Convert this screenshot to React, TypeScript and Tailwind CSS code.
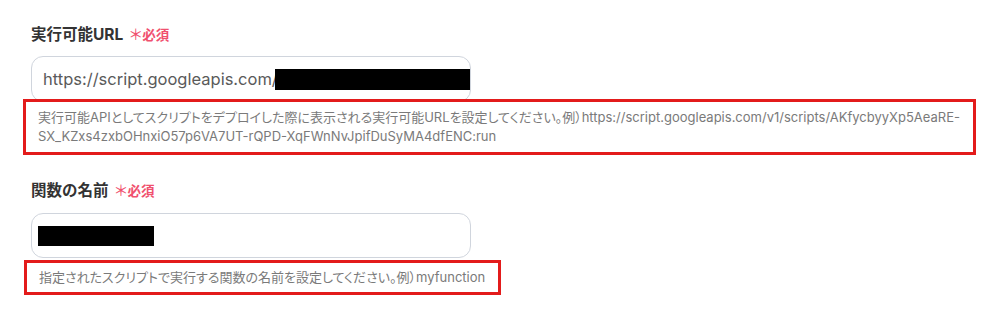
import React from "react";

const font = { fontFamily: "Inter, 'Noto Sans CJK JP', sans-serif" };
const help = { fontFeatureSettings: "'palt'" };

function Label({ text }: { text: string }) {
  return (
    <div className="ml-[8px] flex items-center h-[22px] gap-[5px]">
      <span className="text-[15.5px] font-bold text-[#333333] leading-[22px]">{text}</span>
      <span className="flex items-center text-[#f0506e]">
        <span className="text-[15px] leading-[22px] mr-[-1px]">＊</span>
        <span className="text-[13.5px] font-semibold leading-[22px]">必須</span>
      </span>
    </div>
  );
}

export default function App() {
  return (
    <div className="w-[1001px] h-[317px] bg-white pl-[23px] pt-[24px]" style={font}>
      <Label text="実行可能URL" />
      <div className="ml-[8px] mt-[10px] w-[440px] h-[46px] rounded-[12px] border border-[#d0d5dd] px-[11px] flex items-center overflow-hidden">
        <span className="text-[16.5px] text-[#5a5a5a] whitespace-nowrap">https://script.googleapis.com/</span>
        <span className="ml-[-3px] w-[200px] h-[21px] bg-black shrink-0" />
      </div>
      <div
        className="relative mt-[-3px] w-[953px] border-[3px] border-[#e31b1b] pl-[12px] py-[6px] text-[13px] leading-[19px] text-[#7a7a7a] whitespace-nowrap"
        style={help}
      >
        実行可能APIとしてスクリプトをデプロイした際に表示される実行可能URLを設定してください。例）https://script.googleapis.com/v1/scripts/AKfycbyyXp5AeaRE-
        <br />
        SX_KZxs4zxbOHnxiO57p6VA7UT-rQPD-XqFWnNvJpifDuSyMA4dfENC:run
      </div>
      <div className="mt-[25px]">
        <Label text="関数の名前" />
      </div>
      <div className="ml-[8px] mt-[11px] w-[440px] h-[45px] rounded-[12px] border border-[#d0d5dd] px-[6px] flex items-center">
        <span className="w-[116px] h-[20px] bg-black" />
      </div>
      <div
        className="ml-[1px] mt-[2px] w-[477px] border-[3px] border-[#e31b1b] pl-[12px] py-[5px] text-[13px] leading-[19px] text-[#7a7a7a] whitespace-nowrap"
        style={help}
      >
        指定されたスクリプトで実行する関数の名前を設定してください。例）myfunction
      </div>
    </div>
  );
}
